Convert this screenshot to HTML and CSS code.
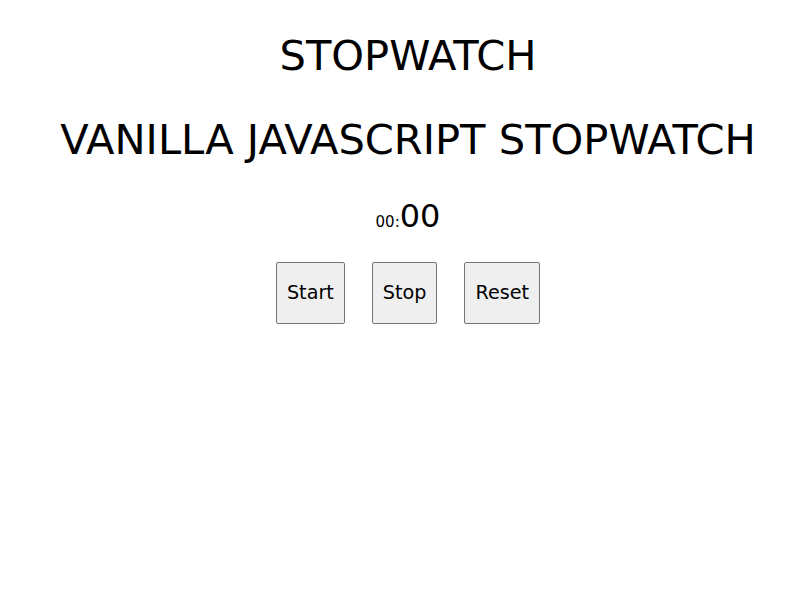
FILE: index.html
```html
<!DOCTYPE html>
<html>
<head>
<meta charset="utf-8">
<title>Stopwatch</title>
<link rel="stylesheet" href="styles.css">
</head>
<body>
<div class="wrapper">
  <h1 class="title">STOPWATCH</h1>
  <h2 class="subtitle">VANILLA JAVASCRIPT STOPWATCH</h2>
  <p class="timer"><span class="seconds">00:</span><span class="tens">00</span></p>
  <div class="controls">
    <button class="btn" id="button-start">Start</button>
    <button class="btn" id="button-stop">Stop</button>
    <button class="btn" id="button-reset">Reset</button>
  </div>
</div>
</body>
</html>
```
FILE: styles.css
```css
html, body {
  margin: 0;
  padding: 0;
  background: #ffffff;
}
body {
  font-family: "DejaVu Sans", sans-serif;
  color: #000000;
}
.wrapper {
  display: flex;
  flex-direction: column;
  align-items: center;
  padding-top: 31px;
  padding-left: 16px;
}
.title {
  margin: 0;
  font-size: 41.6px;
  font-weight: normal;
  line-height: normal;
}
.subtitle {
  margin: 35px 0 0 0;
  font-size: 41.6px;
  font-weight: normal;
  line-height: normal;
}
.timer {
  margin: 33px 0 0 0;
  font-size: 32px;
  line-height: normal;
}
.seconds {
  font-size: 15px;
  line-height: 1;
}
.controls {
  display: flex;
  gap: 27px;
  margin-top: 27px;
}
.btn {
  font-family: "DejaVu Sans", sans-serif;
  font-size: 19.2px;
  color: #000000;
  background: #efefef;
  border: 1px solid #767676;
  border-radius: 2px;
  padding: 18px 10px 19px;
  line-height: 23px;
}
```
